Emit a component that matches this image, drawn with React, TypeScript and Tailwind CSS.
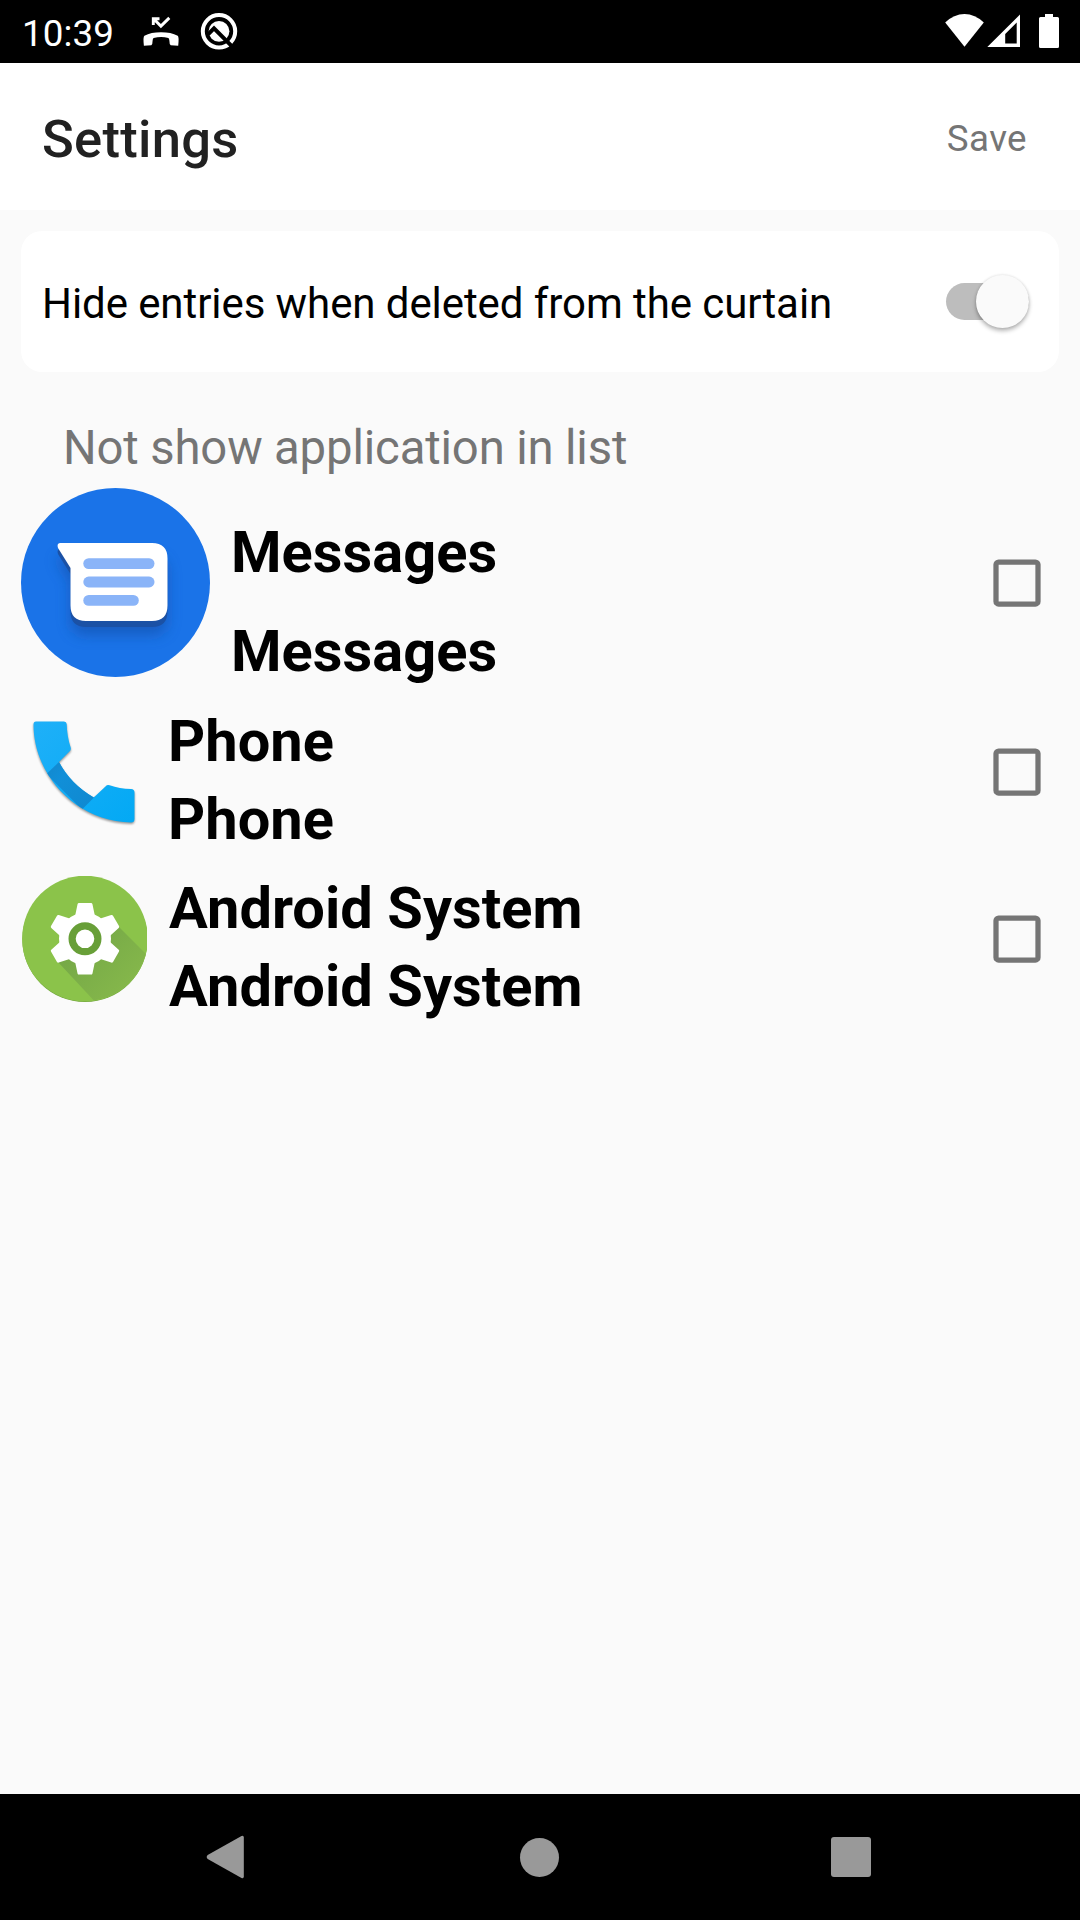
const phonePath =
  'M36 721.5h28q2.500 0 2.700 2.500q.3 12.500 4 23.500q.6 2.200-1 3.800L59 762q11.500 22 34.800 35.500L105.500 786.500q1.700-1.900 4-1.200q10 3.500 21.500 3.700q3.500.2 3.500 3.500v26.500q0 3.500-3.500 3.500C76 821.500 33.500 775 33.500 724.500q0-3 2.500-3z';

function StatusBar() {
  return (
    <header className="flex h-[63px] shrink-0 items-center bg-black text-white">
      <span className="mt-[3px] ml-[22px] w-[112px] text-[36.75px] leading-[43px] tracking-[0.1px]">10:39</span>
      <svg className="h-[63px] w-[116px]" viewBox="134 0 116 63" fill="none">
        <path d="M143.900 45.700q-1-9 .5-10Q151 32.300 161 32.300T177.700 35.700q1.500 1 .5 10l-7.500-.5q-1.300-.8-1.300-4.500-.2-2.200-1-2.800-7.200-2-14.800 0-.9.600-1 2.800 0 3.700-1.300 4.500z" fill="#fff" />
        <path d="M153.300 25v-6.300h6.200M153.500 18.700l7.400 7.400 8.400-8.200" stroke="#fff" strokeWidth="2.900" />
        <circle cx="219" cy="31.300" r="16.200" stroke="#fff" strokeWidth="4" />
        <circle cx="219" cy="31.300" r="10.400" fill="#fff" />
        <path d="M208 34.300l6-6 20 20" stroke="#000" strokeWidth="4" />
      </svg>
      <svg className="ml-auto h-[63px] w-[140px]" viewBox="940 0 140 63" fill="#fff">
        <path d="M945.200 22.500q8.800-8.500 19.300-8.500t19.300 8.500L964.500 46.700z" />
        <path fillRule="evenodd" d="M1020 14.500V47h-32.700zM1016.700 22.500l-11.500 11.500v9.500h11.500z" />
        <path d="M1045 14h8v3h4.500q1.500 0 1.500 1.500v28q0 1.500-1.500 1.500h-17q-1.500 0-1.500-1.500v-28q0-1.500 1.500-1.500h4.500z" />
      </svg>
    </header>
  );
}

function MessagesIcon() {
  return (
    <svg className="mb-[1px] size-[189px] shrink-0" viewBox="21 488 189 189">
      <defs>
        <filter id="blur" x="-30%" y="-30%" width="160%" height="170%">
          <feGaussianBlur stdDeviation="7" />
        </filter>
        <path id="bubble" d="M60 543h92q15.500 0 15.500 15.500v47q0 15.500-15.500 15.500H86q-15.500 0-15.500-15.500V568L58 548q-1.500-4.500 2-5z" />
      </defs>
      <circle cx="115.500" cy="582.500" r="94.500" fill="#1a73e8" />
      <use href="#bubble" y="14" fill="#174ea6" opacity=".6" filter="url(#blur)" />
      <use href="#bubble" y="6" fill="#1b51a5" />
      <use href="#bubble" fill="#fff" />
      <g fill="#8ab4f8">
        <rect x="83.300" y="558.200" width="71.200" height="10.800" rx="5.400" />
        <rect x="83.300" y="576.600" width="71.200" height="10.800" rx="5.400" />
        <rect x="83.300" y="595" width="55.500" height="10.800" rx="5.400" />
      </g>
    </svg>
  );
}

function PhoneIcon() {
  return (
    <svg className="size-[126px] shrink-0" viewBox="21 709 126 126">
      <defs>
        <linearGradient id="handset" x1="0" y1="0" x2="1" y2="1">
          <stop offset="0" stopColor="#1fb0f8" />
          <stop offset="1" stopColor="#03a9f4" />
        </linearGradient>
        <linearGradient id="grip" x1="0" y1="0" x2="1" y2="1">
          <stop offset="0" stopColor="#1486ca" />
          <stop offset=".35" stopColor="#118fd8" />
          <stop offset="1" stopColor="#0f88cf" />
        </linearGradient>
        <filter id="soft" x="-10%" y="-10%" width="120%" height="125%">
          <feGaussianBlur stdDeviation="1.300" />
        </filter>
        <clipPath id="handsetClip">
          <path d={phonePath} />
        </clipPath>
      </defs>
      <path d={phonePath} transform="translate(0 1.500)" fill="#000" opacity=".4" filter="url(#soft)" />
      <path d={phonePath} fill="url(#handset)" />
      <path d="M59 762L46.500 774 82 809.500 94 797.500 98 792 70 755z" fill="url(#grip)" clipPath="url(#handsetClip)" />
    </svg>
  );
}

function SystemIcon() {
  return (
    <svg className="size-[126px] shrink-0" viewBox="21 875.500 126 126">
      <defs>
        <linearGradient id="cast" gradientUnits="userSpaceOnUse" x1="85" y1="938" x2="135" y2="988">
          <stop offset="0" stopColor="#76a947" />
          <stop offset="1" stopColor="#86b84b" />
        </linearGradient>
        <clipPath id="disc">
          <circle cx="85" cy="938" r="62.500" />
        </clipPath>
      </defs>
      <circle cx="85" cy="938.900" r="62.600" fill="#6fa13c" />
      <circle cx="85" cy="938.100" r="62.900" fill="#8bc34a" />
      <path clipPath="url(#disc)" fill="url(#cast)" d="M117.500 925l45 45-50 50L57.500 961z" />
      <g fill="#fff" stroke="#fff" strokeWidth="3" strokeLinejoin="round">
        <circle cx="85" cy="938.300" r="24.500" />
        {[0, 60, 120, 180, 240, 300].map((a) => (
          <path key={a} d="M79 904h12l2.500 12 6 5h-29l6-5z" transform={`rotate(${a} 85 938.300)`} />
        ))}
      </g>
      <circle cx="85" cy="938.300" r="12.900" fill="#fff" stroke="#689f38" strokeWidth="7.200" />
    </svg>
  );
}

function Checkbox() {
  return (
    <svg role="checkbox" aria-checked="false" className="mr-[39px] ml-auto size-[48px] shrink-0" viewBox="0 0 48 48">
      <rect x="3" y="3" width="42" height="42" rx="2.600" fill="none" stroke="#757575" strokeWidth="5.250" />
    </svg>
  );
}

const lineClass = 'whitespace-nowrap text-[57.75px] font-bold tracking-[0.06px]';

export default function App() {
  return (
    <div className="flex h-[1920px] w-[1080px] flex-col overflow-hidden bg-[#fafafa] font-['Roboto',sans-serif] text-black">
      <StatusBar />
      <div className="flex h-[147px] shrink-0 items-center justify-between bg-white pt-[4px] pr-[53px] pl-[42px]">
        <h1 className="text-[52.5px] leading-[62px] font-medium tracking-[0.28px] text-[#212121]">Settings</h1>
        <button className="text-[36.75px] leading-[43px] tracking-[0.4px] text-[#757575]">Save</button>
      </div>

      <main className="flex grow flex-col">
        <section className="mx-[21px] mt-[21px] flex h-[141px] items-center justify-between rounded-[21px] bg-white pr-[30px] pl-[21px]">
          <span className="pt-[5px] text-[42px] leading-[50px] tracking-[-0.075px] whitespace-nowrap">
            Hide entries when deleted from the curtain
          </span>
          <div role="switch" aria-checked="false" className="flex h-[37px] w-[83px] items-center justify-end rounded-full bg-[#bdbdbd]">
            <span className="mb-[1px] size-[53px] shrink-0 rounded-full bg-[#fafafa] shadow-[0_3px_4px_rgba(0,0,0,0.28),0_0_3px_rgba(0,0,0,0.12)]" />
          </div>
        </section>
        <h2 className="mt-[48px] h-[58px] pl-[63px] text-[47.25px] leading-[56px] tracking-[-0.15px] whitespace-nowrap text-[#757575]">
          Not show application in list
        </h2>

        <ul className="flex flex-col pl-[21px]">
          <li className="flex h-[210px] items-center">
            <MessagesIcon />
            <div className="ml-[21px] pt-[37px] leading-[99px]">
              <p className={lineClass}>Messages</p>
              <p className={lineClass}>Messages</p>
            </div>
            <Checkbox />
          </li>
          <li className="flex h-[168px] items-center">
            <PhoneIcon />
            <div className="ml-[21px] pt-[16px] leading-[78px]">
              <p className={lineClass}>Phone</p>
              <p className={lineClass}>Phone</p>
            </div>
            <Checkbox />
          </li>
          <li className="flex h-[166px] items-center">
            <SystemIcon />
            <div className="ml-[22px] pt-[16px] leading-[78px]">
              <p className={lineClass}>Android System</p>
              <p className={lineClass}>Android System</p>
            </div>
            <Checkbox />
          </li>
        </ul>
      </main>

      <nav className="flex h-[126px] shrink-0 items-center justify-between bg-black pr-[209px] pl-[206px]">
        <svg className="h-[44px] w-[38px]" viewBox="206 1835 38 44" fill="#999">
          <path d="M241.500 1836q2.300-.8 2.300 1.500v39q0 2.300-2.300 1.500L207.700 1859q-2-2 0-4z" />
        </svg>
        <span className="ml-[4px] size-[39px] rounded-full bg-[#999]" />
        <span className="size-[40px] rounded-[3px] bg-[#999]" />
      </nav>
    </div>
  );
}
